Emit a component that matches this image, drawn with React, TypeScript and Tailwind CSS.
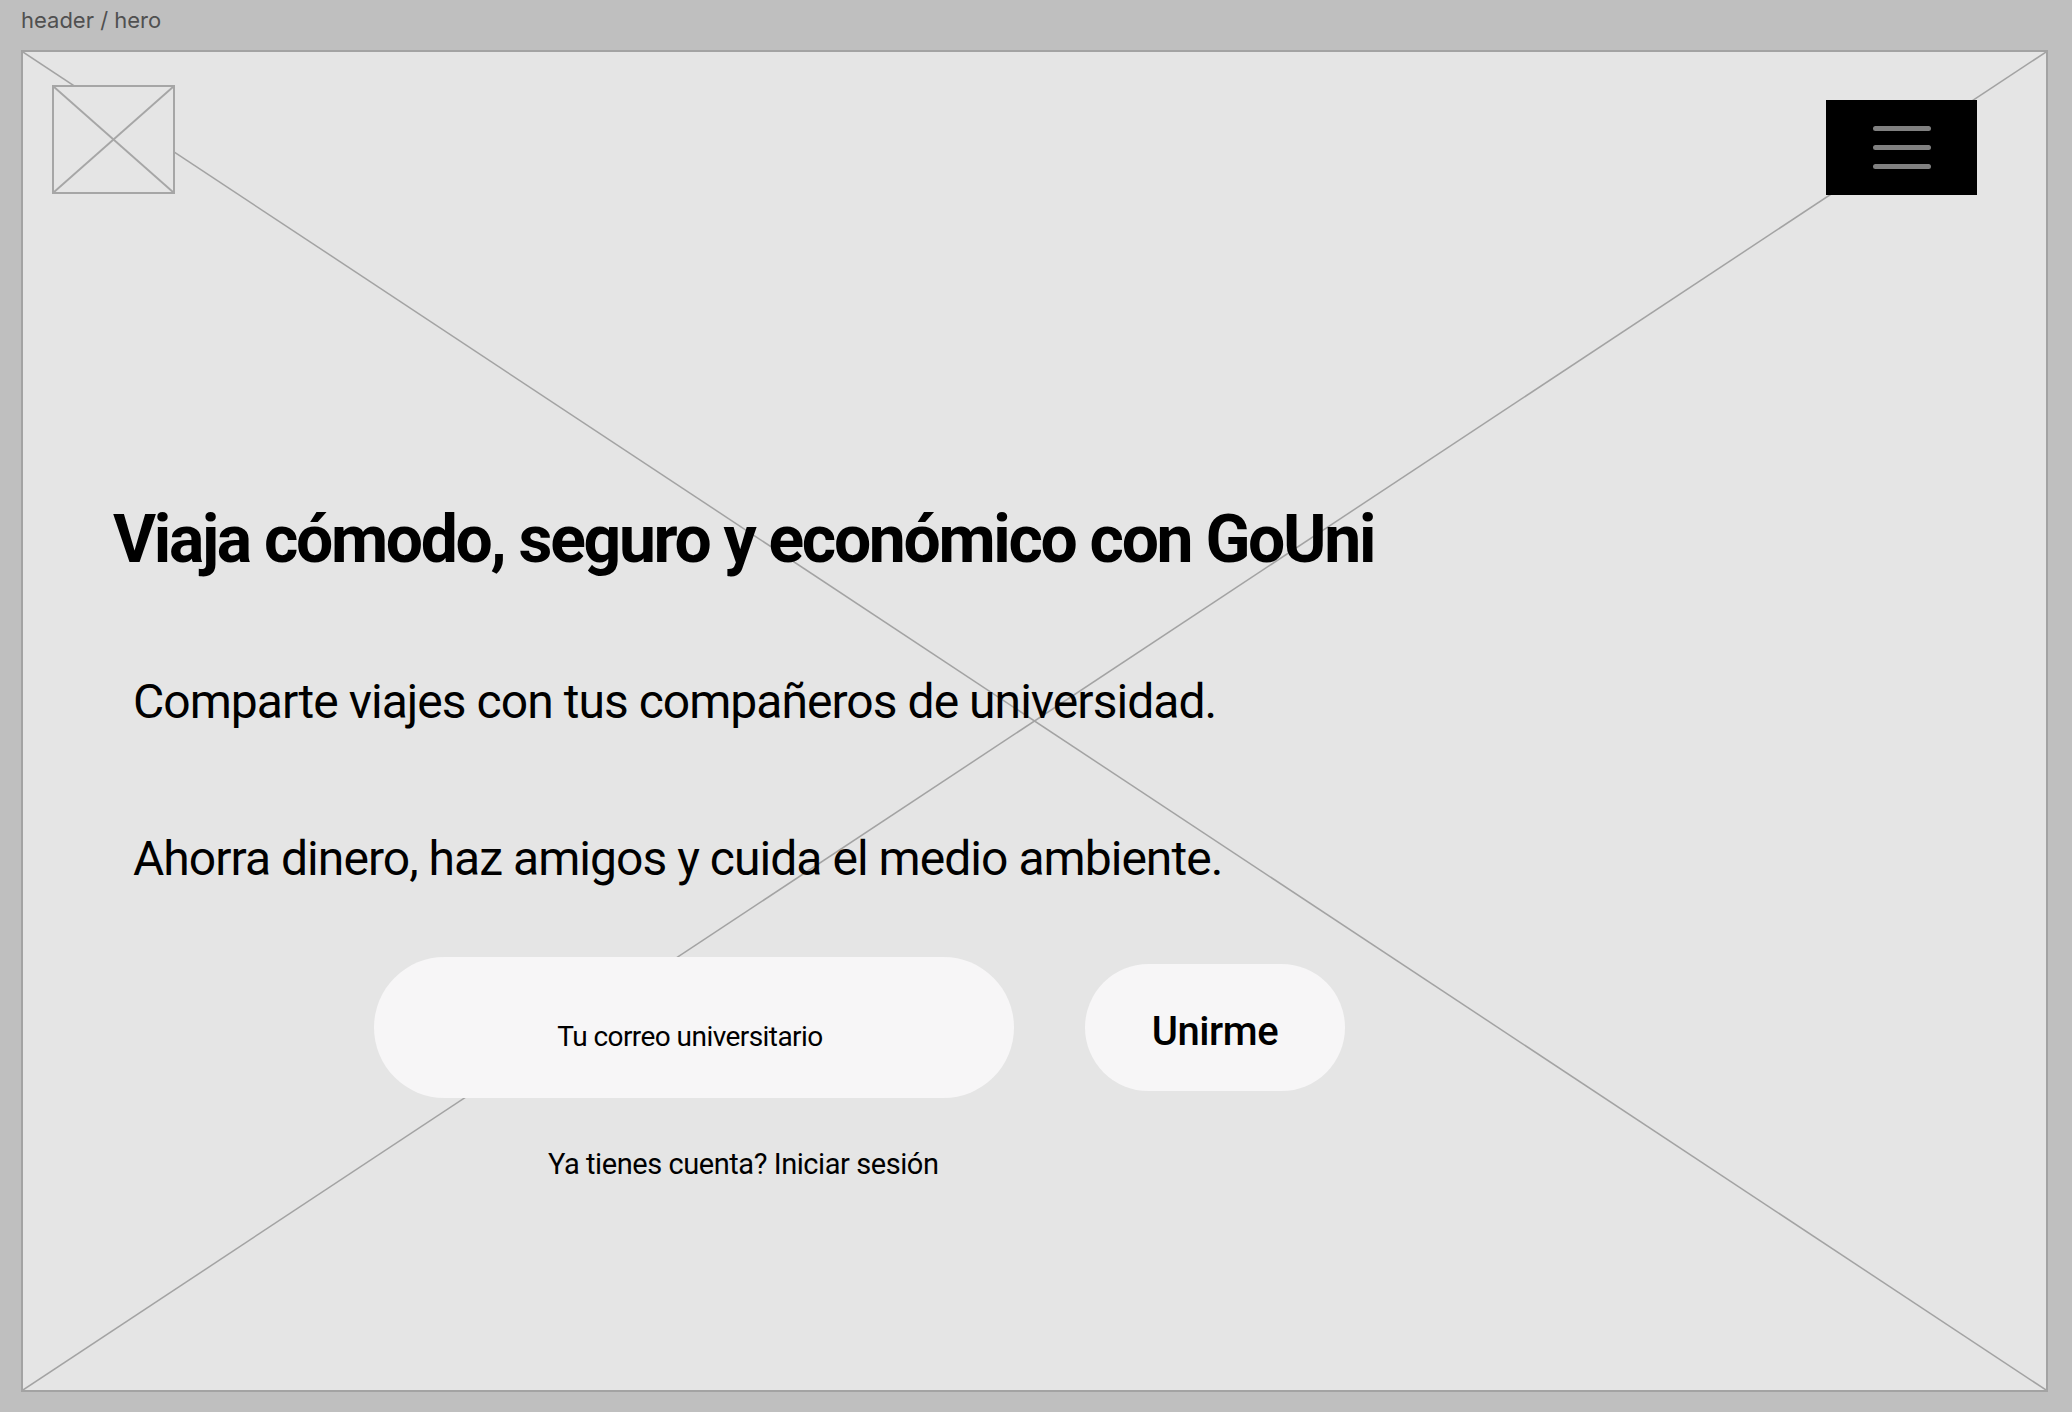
import { Fragment } from 'react';

function CrossLines({ stroke = '#a3a3a3', width = 1.5 }: { stroke?: string; width?: number }) {
  return (
    <svg className="absolute inset-0 w-full h-full pointer-events-none" preserveAspectRatio="none" viewBox="0 0 100 100">
      <line x1="0" y1="0" x2="100" y2="100" stroke={stroke} strokeWidth={width} vectorEffect="non-scaling-stroke" />
      <line x1="100" y1="0" x2="0" y2="100" stroke={stroke} strokeWidth={width} vectorEffect="non-scaling-stroke" />
    </svg>
  );
}

function LogoPlaceholder() {
  return (
    <div className="relative w-[123px] h-[109px] border-2 border-[#a6a6a6] bg-[#e5e5e5]">
      <CrossLines stroke="#a6a6a6" width={2} />
    </div>
  );
}

function MenuButton() {
  return (
    <button className="mt-[15px] w-[151px] h-[95px] bg-black flex flex-col items-center justify-center gap-[14px]">
      {[0, 1, 2].map((i) => (
        <Fragment key={i}>
          <span className="block w-[58px] h-[5px] rounded-full bg-[#808080]" />
        </Fragment>
      ))}
    </button>
  );
}

export default function App() {
  return (
    <div className="min-h-screen w-full bg-[#bfbfbf] pl-[21px] pr-[24px] pb-[20px]" style={{ fontFamily: 'Roboto, "Liberation Sans", sans-serif' }}>
      <div className="h-[50px] pt-[7px] text-[22px] leading-[26px] text-[#505050]" style={{ fontFamily: 'Inter, "Liberation Sans", sans-serif' }}>
        header / hero
      </div>

      <div className="relative w-[2027px] h-[1342px] border-2 border-[#a3a3a3] bg-[#e5e5e5] text-black">
        <CrossLines />

        <div className="relative flex flex-col">
          <header className="flex justify-between items-start pl-[29px] pr-[69px] pt-[33px]">
            <LogoPlaceholder />
            <MenuButton />
          </header>

          <h1 className="mt-[312px] ml-[90px] text-[66px] leading-none font-bold tracking-[-0.035em]">
            Viaja cómodo, seguro y económico con GoUni
          </h1>

          <p className="mt-[105px] ml-[110px] text-[48px] leading-none tracking-[-0.02em]">
            Comparte viajes con tus compañeros de universidad.
          </p>
          <p className="mt-[109px] ml-[110px] text-[48px] leading-none tracking-[-0.02em]">
            Ahorra dinero, haz amigos y cuida el medio ambiente.
          </p>

          <div className="mt-[74px] ml-[351px] flex items-center gap-[71px]">
            <div className="w-[640px] h-[141px] rounded-full bg-[#f7f6f7] flex items-center justify-center pt-[18px] pr-[8px]">
              <span className="text-[28px] leading-none tracking-[-0.02em]">Tu correo universitario</span>
            </div>
            <button className="w-[260px] h-[127px] rounded-full bg-[#f7f6f7] flex items-center justify-center pt-[9px]">
              <span className="text-[40px] leading-none font-medium tracking-[-0.01em]">Unirme</span>
            </button>
          </div>

          <p className="mt-[52px] ml-[525px] text-[29px] leading-none tracking-[-0.015em]">
            Ya tienes cuenta? Iniciar sesión
          </p>
        </div>
      </div>
    </div>
  );
}
